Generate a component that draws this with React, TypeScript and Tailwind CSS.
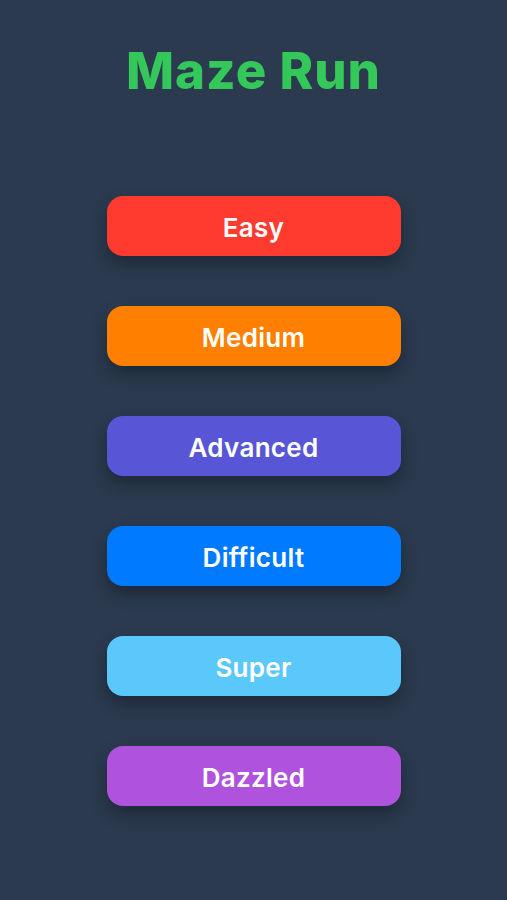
const levels = [
  { name: "Easy", color: "bg-[#ff3b30]" },
  { name: "Medium", color: "bg-[#ff8000]" },
  { name: "Advanced", color: "bg-[#5856d6]" },
  { name: "Difficult", color: "bg-[#007aff]" },
  { name: "Super", color: "bg-[#5ac8fa]" },
  { name: "Dazzled", color: "bg-[#af52de]" },
];

export default function App() {
  return (
    <div className="w-[507px] h-[900px] bg-[#2b3a4f] flex flex-col items-center font-['Inter',sans-serif]">
      <h1 className="mt-[40px] h-[62px] flex items-center text-[51px] font-extrabold tracking-[1px] text-[#34c759]">
        Maze Run
      </h1>
      <div className="mt-[94px] flex flex-col gap-[50px]">
        {levels.map((level) => (
          <button
            key={level.name}
            className={`${level.color} w-[294px] h-[60px] pt-[3px] rounded-[16px] text-white text-[26px] font-semibold tracking-[0.3px] shadow-[0_8px_16px_rgba(0,0,0,0.3)]`}
          >
            {level.name}
          </button>
        ))}
      </div>
    </div>
  );
}
